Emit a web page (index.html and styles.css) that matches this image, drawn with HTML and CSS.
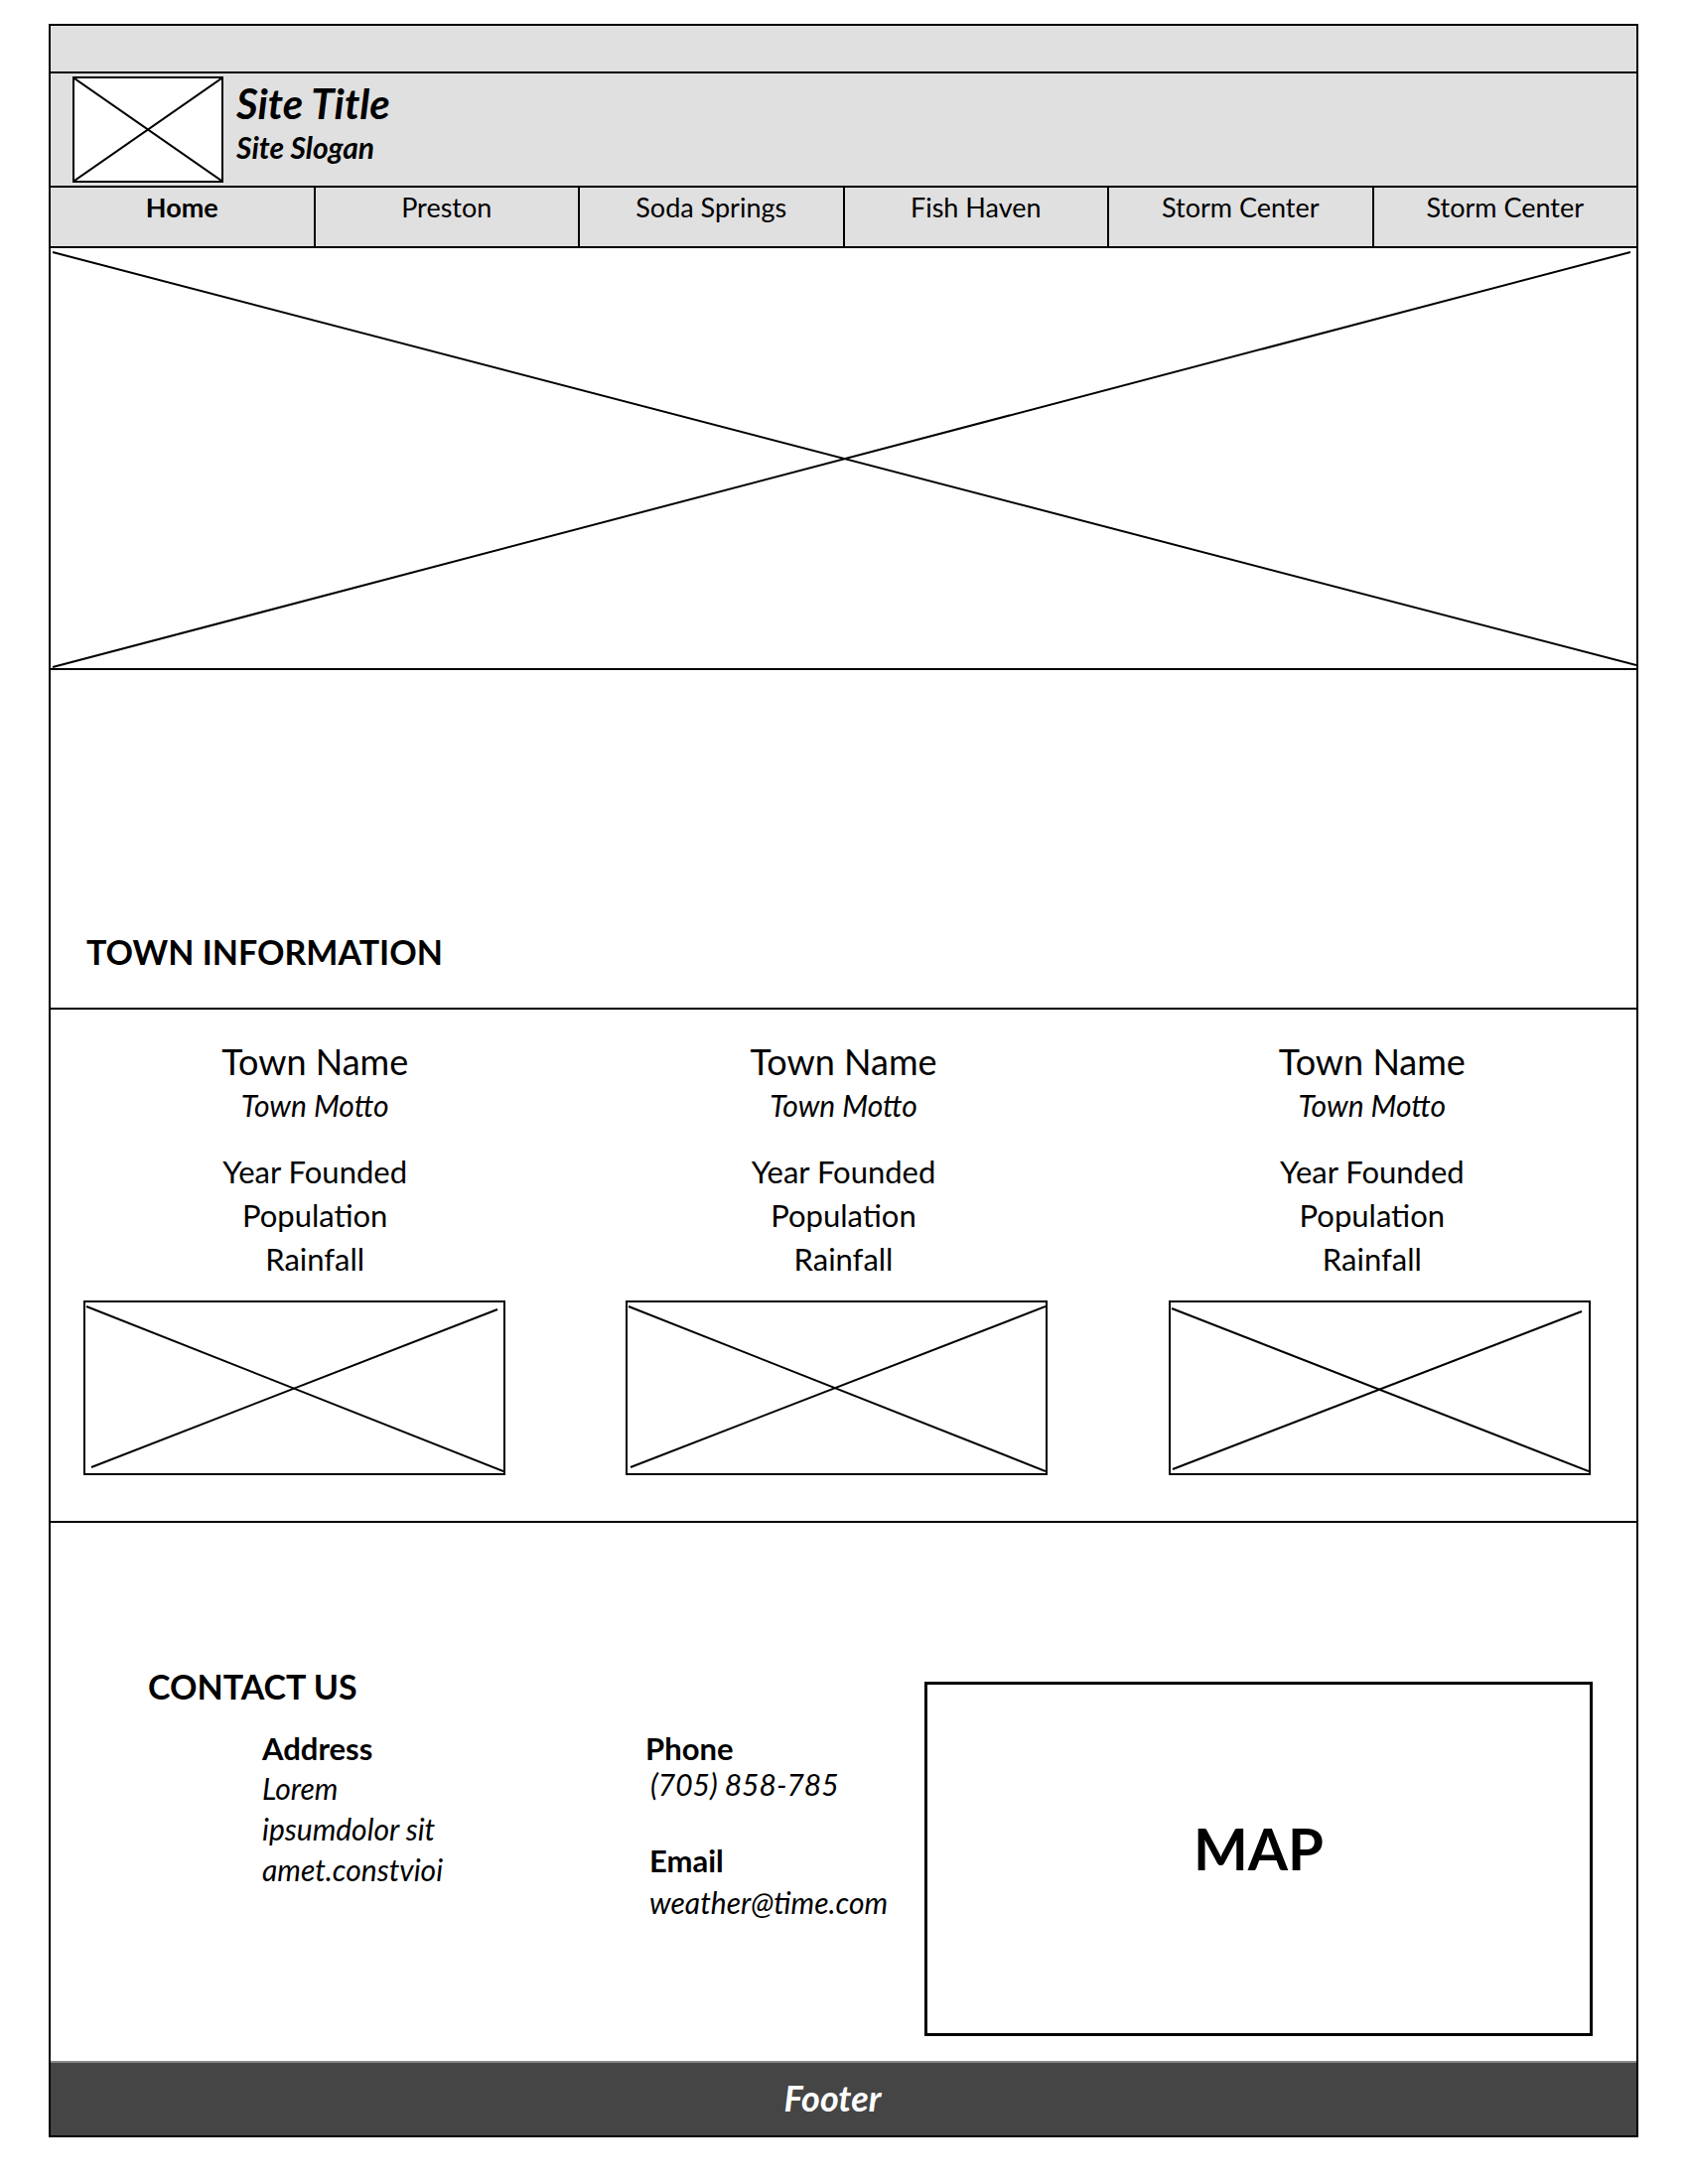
FILE: index.html
```html
<!DOCTYPE html>
<html lang="en">
<head>
<meta charset="UTF-8">
<meta name="viewport" content="width=device-width, initial-scale=1.0">
<title>Town Weather Wireframe</title>
<link rel="stylesheet" href="styles.css">
</head>
<body>
<div class="page">
  <!-- top strip -->
  <div class="topbar"></div>

  <!-- header: logo + title -->
  <header class="site-head">
    <div class="logo">
      <svg viewBox="0 0 147 103" preserveAspectRatio="none">
        <line x1="0" y1="0" x2="147" y2="103" />
        <line x1="0" y1="103" x2="147" y2="0" />
      </svg>
    </div>
    <div class="brand">
      <h1>Site Title</h1>
      <p>Site Slogan</p>
    </div>
  </header>

  <nav class="main-nav">
    <a class="active">Home</a>
    <a>Preston</a>
    <a>Soda Springs</a>
    <a>Fish Haven</a>
    <a>Storm Center</a>
    <a>Storm Center</a>
  </nav>

  <!-- hero image placeholder -->
  <div class="hero">
    <svg viewBox="0 0 1597 423" preserveAspectRatio="none">
      <line x1="2" y1="4" x2="1597" y2="420" />
      <line x1="2" y1="422" x2="1591" y2="4" />
    </svg>
  </div>

  <section class="town-info">
    <h2>TOWN INFORMATION</h2>
    <div class="towns">
      <div class="town">
        <h3>Town Name</h3>
        <p class="motto">Town Motto</p>
        <ul class="facts">
          <li>Year Founded</li>
          <li>Population</li>
          <li>Rainfall</li>
        </ul>
        <div class="town-img">
          <svg viewBox="0 0 421 172" preserveAspectRatio="none">
            <line x1="1" y1="4" x2="421" y2="170" />
            <line x1="6" y1="166" x2="415" y2="7" />
          </svg>
        </div>
      </div>
      <div class="town">
        <h3>Town Name</h3>
        <p class="motto">Town Motto</p>
        <ul class="facts">
          <li>Year Founded</li>
          <li>Population</li>
          <li>Rainfall</li>
        </ul>
        <div class="town-img">
          <svg viewBox="0 0 421 172" preserveAspectRatio="none">
            <line x1="1" y1="4" x2="421" y2="170" />
            <line x1="3" y1="166" x2="421" y2="4" />
          </svg>
        </div>
      </div>
      <div class="town">
        <h3>Town Name</h3>
        <p class="motto">Town Motto</p>
        <ul class="facts">
          <li>Year Founded</li>
          <li>Population</li>
          <li>Rainfall</li>
        </ul>
        <div class="town-img">
          <svg viewBox="0 0 421 172" preserveAspectRatio="none">
            <line x1="1" y1="6" x2="421" y2="170" />
            <line x1="2" y1="168" x2="414" y2="9" />
          </svg>
        </div>
      </div>
    </div>
  </section>

  <section class="contact">
    <div class="contact-text">
      <h2>CONTACT US</h2>
      <div class="contact-cols">
        <div class="addr">
          <h4>Address</h4>
          <p>Lorem<br>ipsumdolor sit<br>amet.constvioi</p>
        </div>
        <div class="reach">
          <h4>Phone</h4>
          <p>(705) 858-785</p>
          <h4 class="email-head">Email</h4>
          <p class="email">weather@time.com</p>
        </div>
      </div>
    </div>
    <div class="map">MAP</div>
  </section>

  <footer class="site-foot">Footer</footer>
</div>
</body>
</html>
```

FILE: styles.css
```css
body {
  margin: 0;
  background: #fff;
  font-family: 'Lato', 'Open Sans', Arial, sans-serif;
  color: #000;
}
.page {
  width: 1601px;
  margin: 24px 0 0 49px;
  border: 2px solid #000;
  box-sizing: border-box;
}
svg line {
  stroke: #000;
  stroke-width: 2;
  vector-effect: non-scaling-stroke;
}

/* header */
.topbar {
  height: 46px;
  background: #e0e0e0;
  border-bottom: 2px solid #000;
}
.site-head {
  display: flex;
  align-items: flex-start;
  height: 113px;
  box-sizing: border-box;
  padding: 3px 0 0 22px;
  background: #e0e0e0;
}
.logo {
  width: 152px;
  height: 107px;
  box-sizing: border-box;
  border: 2px solid #000;
  background: #fff;
}
.logo svg {
  display: block;
  width: 100%;
  height: 100%;
}
.brand {
  margin-left: 13px;
}
.brand h1 {
  margin: 4px 0 0 0;
  font-size: 42px;
  line-height: 46px;
  font-weight: 700;
  font-style: italic;
}
.brand p {
  margin: 5px 0 0 0;
  font-size: 30px;
  line-height: 32px;
  font-weight: 700;
  font-style: italic;
}

/* nav */
.main-nav {
  display: flex;
  height: 63px;
  box-sizing: border-box;
  background: #e0e0e0;
  border-top: 2px solid #000;
  border-bottom: 2px solid #000;
}
.main-nav a {
  flex: 1;
  text-align: center;
  font-size: 27px;
  line-height: 30px;
  padding-top: 5px;
  border-right: 2px solid #000;
}
.main-nav a:last-child { border-right: none; }
.main-nav a.active { font-weight: 700; }

/* hero */
.hero {
  height: 425px;
  box-sizing: border-box;
  border-bottom: 2px solid #000;
}
.hero svg {
  display: block;
  width: 100%;
  height: 100%;
}

/* towns */
.town-info h2 {
  margin: 264px 0 36px 36px;
  font-size: 34px;
  line-height: 40px;
  font-weight: 700;
}
.towns {
  display: grid;
  grid-template-columns: repeat(3, 1fr);
  border-top: 2px solid #000;
  border-bottom: 2px solid #000;
  padding: 31px 0 46px 0;
}
.town {
  display: flex;
  flex-direction: column;
  align-items: center;
  text-align: center;
}
.town h3 {
  margin: 0;
  font-size: 36px;
  line-height: 42px;
  font-weight: 400;
}
.motto {
  margin: 6px 0 0 0;
  font-size: 30px;
  line-height: 34px;
  font-style: italic;
}
.facts {
  list-style: none;
  margin: 28px 0 0 0;
  padding: 0;
  font-size: 31px;
  line-height: 44px;
}
.town-img {
  align-self: flex-start;
  width: 425px;
  height: 176px;
  margin-top: 20px;
  box-sizing: border-box;
  border: 2px solid #000;
}
.town:nth-child(1) .town-img { margin-left: 33px; }
.town:nth-child(2) .town-img { margin-left: 47px; }
.town:nth-child(3) .town-img { margin-left: 61px; }
.town-img svg {
  display: block;
  width: 100%;
  height: 100%;
}

/* contact */
.contact {
  display: flex;
  align-items: flex-start;
  padding: 145px 44px 25px 98px;
}
.contact-text {
  flex: 1;
}
.contact h2 {
  margin: 0;
  font-size: 34px;
  line-height: 40px;
  font-weight: 700;
}
.contact-cols {
  display: flex;
  margin: 25px 0 0 115px;
}
.addr {
  width: 386px;
}
.contact h4 {
  margin: 0;
  font-size: 31px;
  line-height: 34px;
  font-weight: 700;
}
.addr p {
  margin: 3px 0 0 0;
  font-size: 30px;
  line-height: 41px;
  font-style: italic;
}
.reach p {
  margin: 2px 0 0 5px;
  font-size: 30px;
  line-height: 34px;
  font-style: italic;
}
.reach .email-head {
  margin-top: 43px;
  margin-left: 4px;
}
.reach .email {
  margin-top: 8px;
  margin-left: 4px;
}
.map {
  width: 673px;
  height: 357px;
  margin-top: 15px;
  box-sizing: border-box;
  border: 3px solid #000;
  display: flex;
  align-items: center;
  justify-content: center;
  padding-bottom: 22px;
  font-size: 58px;
  font-weight: 700;
}

/* footer */
.site-foot {
  height: 73px;
  background: #454545;
  border-top: 2px solid #888;
  color: #fff;
  text-align: center;
  padding-right: 22px;
  font-size: 36px;
  line-height: 70px;
  font-weight: 700;
  font-style: italic;
}
```
